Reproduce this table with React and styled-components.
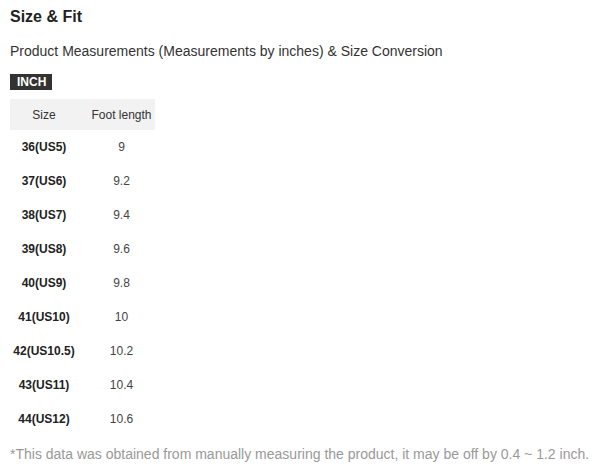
import styled, { createGlobalStyle } from "styled-components";

const GlobalStyle = createGlobalStyle`
  body {
    margin: 0;
    background: #fff;
    font-family: "Liberation Sans", Arial, sans-serif;
  }
`;

const Styled = {
  Page: styled.div`
    padding: 6px 10px 0;
    color: #333;
  `,
  Title: styled.h2`
    margin: 0;
    font-size: 16px;
    font-weight: bold;
    line-height: 22px;
    color: #222;
  `,
  Subtitle: styled.p`
    margin: 14px 0 0;
    font-size: 14px;
    line-height: 18px;
    color: #333;
  `,
  Badge: styled.span`
    display: inline-block;
    margin-top: 14px;
    padding: 0 6px 0 7px;
    height: 16px;
    line-height: 16px;
    background: #333;
    color: #fff;
    font-size: 12px;
    font-weight: bold;
  `,
  Table: styled.table`
    margin-top: 9px;
    border-collapse: collapse;
    font-size: 12px;
  `,
  HeadCell: styled.th`
    height: 31px;
    padding: 0 0 0 ${(p) => p.$indent || 0}px;
    width: ${(p) => p.$width}px;
    background: #f2f2f2;
    font-weight: normal;
    color: #333;
    text-align: center;
  `,
  Cell: styled.td`
    height: 34px;
    padding: 0 0 0 ${(p) => p.$indent || 0}px;
    text-align: center;
    font-weight: ${(p) => (p.$bold ? "bold" : "normal")};
    font-size: 12px;
    color: ${(p) => (p.$bold ? "#222" : "#444")};
  `,
  Note: styled.p`
    margin: 9px 0 0;
    font-size: 14px;
    line-height: 18px;
    color: #999;
  `,
};

const rows = [
  ["36(US5)", "9"],
  ["37(US6)", "9.2"],
  ["38(US7)", "9.4"],
  ["39(US8)", "9.6"],
  ["40(US9)", "9.8"],
  ["41(US10)", "10"],
  ["42(US10.5)", "10.2"],
  ["43(US11)", "10.4"],
  ["44(US12)", "10.6"],
];

const App = () => {
  return (
    <>
      <GlobalStyle />
      <Styled.Page>
        <Styled.Title>Size &amp; Fit</Styled.Title>
        <Styled.Subtitle>
          Product Measurements (Measurements by inches) &amp; Size Conversion
        </Styled.Subtitle>
        <Styled.Badge>INCH</Styled.Badge>
        <Styled.Table>
          <thead>
            <tr>
              <Styled.HeadCell $width={68}>Size</Styled.HeadCell>
              <Styled.HeadCell $width={67} $indent={10}>
                Foot length
              </Styled.HeadCell>
            </tr>
          </thead>
          <tbody>
            {rows.map(([size, length]) => (
              <tr key={size}>
                <Styled.Cell $bold>{size}</Styled.Cell>
                <Styled.Cell $indent={10}>{length}</Styled.Cell>
              </tr>
            ))}
          </tbody>
        </Styled.Table>
        <Styled.Note>
          *This data was obtained from manually measuring the product, it may be
          off by 0.4 ~ 1.2 inch.
        </Styled.Note>
      </Styled.Page>
    </>
  );
};

export default App;
